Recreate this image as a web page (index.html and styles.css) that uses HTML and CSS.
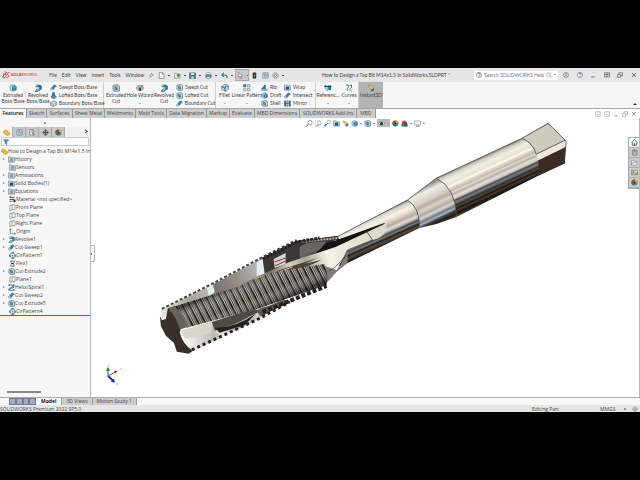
FILE: index.html
```html
<!DOCTYPE html>
<html lang="en">
<head>
<meta charset="utf-8">
<title>SOLIDWORKS Premium 2022</title>
<link rel="stylesheet" href="styles.css">
</head>
<body>
<svg class="defs" aria-hidden="true">
  <symbol id="boss" viewBox="0 0 16 16"><path d="M2 4l6-3 6 3v8l-6 3-6-3z" fill="#b9d4e2" stroke="#577a8c"/><path d="M6 5l5-2 4 2v7l-5 2-4-2z" fill="#1c789f"/><path d="M6 5l4 2 5-2M10 7v7" stroke="#b9e1ee" fill="none"/></symbol>
  <symbol id="revolve" viewBox="0 0 16 16"><path d="M4 2h6a5 5 0 0 1 1 10l-3 3H2l4-5h3a2 2 0 0 0 0-4H4z" fill="#247da4" stroke="#1b536e"/><path d="M3 3l5 1M5 13l5-2" stroke="#b8dce8" stroke-width="2"/></symbol>
  <symbol id="sweep" viewBox="0 0 16 16"><path d="M2 14V9c5 1 3-7 9-7l4 3c-6 0-4 8-10 8z" fill="#2683ad" stroke="#1d536d"/><path d="M2 9l4 2v4l-4-1z" fill="#b5d6e5"/></symbol>
  <symbol id="loft" viewBox="0 0 16 16"><path d="M6 1h4l1 6 4 5-5 3-8-2 3-6z" fill="#2e7898" stroke="#23485a"/><path d="M2 13l5-2 8 1" stroke="#d2edf5" fill="none"/></symbol>
  <symbol id="boundary" viewBox="0 0 16 16"><path d="M1 6l8-4 6 3v6l-8 4-6-3z" fill="#d4dce0" stroke="#647078" stroke-width="1.5"/><path d="M1 7l6 3 8-4M7 10v5" fill="none" stroke="#647078"/></symbol>
  <symbol id="cut" viewBox="0 0 16 16"><path d="M2 3l9-2 4 3v10l-9 1-4-3z" fill="#c5d1d7" stroke="#4b6470" stroke-width="1.3"/><path d="M5 5h6v7H5z" fill="#286f8e"/><path d="M5 12l6-7" stroke="#edf5f7"/></symbol>
  <symbol id="hole" viewBox="0 0 16 16"><ellipse cx="8" cy="8" rx="7" ry="5" fill="#c9cdd0" stroke="#555"/><path d="M5 7h5v7H7z" fill="#39454c"/><path d="M8 7l5-6 2 2-5 6z" fill="#888d91"/></symbol>
  <symbol id="fillet" viewBox="0 0 16 16"><path d="M1 5l6-4h4c3 0 4 3 4 5v5l-6 4-8-4z" fill="#bed3dc" stroke="#557180"/><path d="M1 5l7 3c0-4 3-5 7-3M8 8v7" fill="none" stroke="#276b86" stroke-width="2"/></symbol>
  <symbol id="linear" viewBox="0 0 16 16"><path d="M1 1h5v5H1zM9 1h5v5H9zM1 9h5v5H1zM9 9h5v5H9z" fill="#d0dce1" stroke="#5e7a86"/><path d="M1 1h5v5H1z" fill="#2b7b9e"/></symbol>
  <symbol id="rib" viewBox="0 0 16 16"><path d="M1 11L9 1l2 1v9h4v4H1z" fill="#286f8e"/><path d="M1 12h14v2H1z" fill="#b3cbd5"/></symbol>
  <symbol id="curves" viewBox="0 0 16 16"><path d="M2 2h4c4 4-5 7 0 12M9 3l4-1v5c-4 2-4 5 0 7" fill="none" stroke="#2d7c9a" stroke-width="2"/></symbol>
  <symbol id="refgeo" viewBox="0 0 16 16"><path d="M2 2l6 3v9L2 9z" fill="#b7dbe9" stroke="#387088"/><path d="M8 3h6v9H9z" fill="#1c7498"/><path d="M1 5h14" stroke="#183e50" stroke-width="2"/></symbol>
  <symbol id="instant" viewBox="0 0 16 16"><path d="M2 2l6 1 6 7-2 4-6-5z" fill="#e7ce7c" stroke="#8d7527"/><path d="M8 11l6-3v5l-5 2z" fill="#386b83"/></symbol>
  <symbol id="mirror" viewBox="0 0 16 16"><path d="M1 2h4v12H1zM11 2h4v12h-4z" fill="#487c93" stroke="#294b5a"/><path d="M8 0v16M4 8h8" stroke="#222"/></symbol>
  <symbol id="part" viewBox="0 0 16 16"><path d="M1 5l4-3 5 2 1 3 4 1v4l-4 3-5-2-1-3-4-1z" fill="#e2b42c" stroke="#8e6b12"/><path d="M1 5l5 2 4-3M6 12l5-2 4-2" fill="none" stroke="#fff1a6"/></symbol>
  <symbol id="folder" viewBox="0 0 16 16"><path d="M1 2h5l1 2h8v10H1z" fill="#dfe5e8" stroke="#65727a" stroke-width="1.4"/><path d="M5 6h6v6H5zM8 6v6M5 9h6" fill="none" stroke="#356882"/></symbol>
  <symbol id="solid" viewBox="0 0 16 16"><path d="M1 2h5l1 2h8v10H1z" fill="#dfe5e8" stroke="#65727a" stroke-width="1.4"/><path d="M4 6h8v7H4z" fill="#195575"/></symbol>
  <symbol id="material" viewBox="0 0 16 16"><path d="M1 3h12M1 8h12M1 12h7" stroke="#555" stroke-width="2"/><path d="M10 10l5-2v5l-4 2z" fill="#252525"/><path d="M4 1v4M9 6v4" stroke="#222" stroke-width="2"/></symbol>
  <symbol id="plane" viewBox="0 0 16 16"><path d="M2 3l5-1v11l-5 2zM7 2h7v11H7" fill="#f8f9fa" stroke="#68727a" stroke-width="1.4"/></symbol>
  <symbol id="origin" viewBox="0 0 16 16"><path d="M3 2v11h11M1 4l2-3 2 3M12 11l3 2-3 2" fill="none" stroke="#545d63" stroke-width="1.5"/></symbol>
  <symbol id="pattern" viewBox="0 0 16 16"><circle cx="8" cy="8" r="6" fill="none" stroke="#5c717c" stroke-width="1.5"/><path d="M6 0h5v4H6zM0 6h4v5H0zM12 6h4v5h-4zM6 12h5v4H6zM6 6h4v4H6z" fill="#66869a"/></symbol>
  <symbol id="flex" viewBox="0 0 16 16"><path d="M4 2h8v3c-4 2-4 4 0 6v3H4v-3c3-2 3-4 0-6z" fill="#e1e5e7" stroke="#4c5357" stroke-width="1.5"/><path d="M5 8h5" stroke="#222" stroke-width="2"/></symbol>
  <symbol id="helix" viewBox="0 0 16 16"><path d="M2 3c4-3 12 1 12 4S2 8 2 11s8 5 12 2M3 13L13 3" fill="none" stroke="#256a86" stroke-width="2"/><path d="M1 1h3v3H1zM12 1h3v3h-3zM1 12h3v3H1zM12 12h3v3h-3z" fill="#315b6f"/></symbol>
  <symbol id="search" viewBox="0 0 16 16"><circle cx="9" cy="6" r="5" fill="none" stroke="#59636a" stroke-width="1.4"/><path d="M5 10l-4 5" stroke="#59636a" stroke-width="2"/></symbol>
  <symbol id="search-r" viewBox="0 0 16 16"><circle cx="7" cy="7" r="5" fill="none" stroke="#687177" stroke-width="1.3"/><path d="M11 11l4 4" stroke="#687177" stroke-width="1.5"/></symbol>
  <symbol id="area" viewBox="0 0 16 16"><path d="M1 1h12v12H1z" fill="none" stroke="#7b858c" stroke-dasharray="2 2"/><circle cx="10" cy="7" r="4" fill="#fff" stroke="#59636a"/><path d="M7 10l-4 5" stroke="#59636a" stroke-width="2"/></symbol>
  <symbol id="previous" viewBox="0 0 16 16"><circle cx="11" cy="5" r="4" fill="none" stroke="#59636a"/><path d="M8 8l-5 5H1M5 9l-4 4 4 2" stroke="#1f779b" fill="none" stroke-width="2"/></symbol>
  <symbol id="appearance" viewBox="0 0 16 16"><circle cx="8" cy="8" r="7" fill="#3b83c3"/><path d="M8 8V1a7 7 0 0 1 7 7z" fill="#e4a926"/><path d="M8 8v7a7 7 0 0 1-7-7z" fill="#298c4e"/><path d="M1 8a7 7 0 0 1 7-7v7z" fill="#c8352c"/><circle cx="8" cy="8" r="2" fill="#292929"/></symbol>
  <symbol id="scene" viewBox="0 0 16 16"><circle cx="7" cy="6" r="5" fill="#c63d2b"/><path d="M1 15V7l6 4 8-2v6z" fill="#268a66"/><path d="M8 8l6-4v10l-6 1z" fill="#42525d"/></symbol>
  <symbol id="monitor" viewBox="0 0 16 16"><path d="M1 2h14v9H1zM6 11v3h5v-3M4 15h9" fill="#f3f4f5" stroke="#7b8389" stroke-width="1.2"/></symbol>
  <symbol id="eye" viewBox="0 0 16 16"><path d="M1 8q7-9 14 0-7 8-14 0z" fill="#fff" stroke="#444"/><circle cx="8" cy="8" r="3.5" fill="#1d292f"/></symbol>
  <symbol id="new" viewBox="0 0 16 16"><path d="M3 1h7l4 4v10H3zM10 1v4h4" fill="#fafafa" stroke="#5a6267" stroke-width="1.3"/></symbol>
  <symbol id="open" viewBox="0 0 16 16"><path d="M1 3h5l1 2h7v9H1z" fill="#eee" stroke="#5c6870" stroke-width="1.2"/><path d="M5 8l5-5 5 5h-3v4H8V8z" fill="#319158"/></symbol>
  <symbol id="save" viewBox="0 0 16 16"><path d="M1 2h14v13H1z" fill="#467789" stroke="#344f5b"/><path d="M4 2h8v5H4zM5 10h6v5H5z" fill="#d7e3e8"/></symbol>
  <symbol id="print" viewBox="0 0 16 16"><path d="M4 1h8v5H4z" fill="#fff" stroke="#536773"/><path d="M1 6h14v7H1z" fill="#53798a"/><path d="M4 10h8v5H4z" fill="#e4edf1" stroke="#536773"/></symbol>
  <symbol id="undo" viewBox="0 0 16 16"><path d="M13 14c3-5-1-8-9-7M6 2L2 7l5 4" fill="none" stroke="#25768d" stroke-width="2.5"/></symbol>
  <symbol id="cursor" viewBox="0 0 16 16"><path d="M4 1l8 8H9l2 5-2 1-2-5-3 2z" fill="#fff" stroke="#444"/></symbol>
  <symbol id="traffic" viewBox="0 0 16 16"><rect x="4" y="1" width="8" height="14" rx="2" fill="#24282a"/><circle cx="8" cy="4" r="2" fill="#a53026"/><circle cx="8" cy="8" r="2" fill="#d2a33c"/><circle cx="8" cy="12" r="2" fill="#34794a"/></symbol>
  <symbol id="list" viewBox="0 0 16 16"><path d="M2 2h12v12H2zM7 2v12M2 5h12" fill="#fff" stroke="#487284" stroke-width="1.4"/><path d="M9 8h4M9 11h4M4 8h2M4 11h2" stroke="#256a87" stroke-width="1.5"/></symbol>
  <symbol id="config" viewBox="0 0 16 16"><path d="M2 1h8v13H2zM5 4h5M5 7h3" fill="#f3f4f5" stroke="#555f66" stroke-width="1.3"/><path d="M8 7l6 6-3 2-4-4z" fill="#737f86"/></symbol>
  <symbol id="target" viewBox="0 0 16 16"><circle cx="8" cy="8" r="5" fill="none" stroke="#4e5458" stroke-width="1.7"/><path d="M8 0v16M1 8h14" stroke="#333" stroke-width="1.7"/></symbol>
  <symbol id="gear" viewBox="0 0 16 16"><circle cx="8" cy="8" r="6" fill="none" stroke="#555c60" stroke-width="2" stroke-dasharray="3 1.6"/><circle cx="8" cy="8" r="2.5" fill="none" stroke="#555c60" stroke-width="1.3"/></symbol>
  <symbol id="user" viewBox="0 0 16 16"><circle cx="8" cy="8" r="7" fill="none" stroke="#555c60" stroke-width="1.3"/><circle cx="8" cy="6" r="2.5" fill="none" stroke="#555c60"/><path d="M4 13c0-5 8-5 8 0" fill="none" stroke="#555c60" stroke-width="1.3"/></symbol>
  <symbol id="help" viewBox="0 0 16 16"><circle cx="8" cy="8" r="7" fill="#fafafa" stroke="#54616a" stroke-width="1.4"/><path d="M5 6c0-4 6-4 6 0 0 2-3 2-3 4m0 1v2" stroke="#34556a" fill="none" stroke-width="1.8"/></symbol>
  <symbol id="min" viewBox="0 0 16 16"><path d="M3 13h9" stroke="currentColor" stroke-width="2"/></symbol>
  <symbol id="span" viewBox="0 0 16 16"><path d="M1 2h14v11H1zM1 7h14M8 2v11" fill="none" stroke="currentColor" stroke-width="1.5"/></symbol>
  <symbol id="pane" viewBox="0 0 16 16"><path d="M2 2h12v12H2zM6 9h5" fill="none" stroke="currentColor" stroke-width="1.4"/></symbol>
  <symbol id="restore" viewBox="0 0 16 16"><path d="M1 7h9v7H1zM5 7V2h10v8h-5" fill="none" stroke="currentColor" stroke-width="1.5"/></symbol>
  <symbol id="close" viewBox="0 0 16 16"><path d="M3 3l10 10M13 3L3 13" stroke="currentColor" stroke-width="2"/></symbol>
  <symbol id="filter" viewBox="0 0 16 16"><path d="M1 2h14l-5 6v7l-4-3V8z" fill="#679bb5" stroke="#1f4e67" stroke-width="1.4"/></symbol>
  <symbol id="home" viewBox="0 0 16 16"><path d="M1 8l7-7 7 7M3 7v8h10V7" fill="#e9f1f4" stroke="#396a7f" stroke-width="1.7"/><path d="M6 10h4v5H6z" fill="#396a7f"/></symbol>
  <symbol id="library" viewBox="0 0 16 16"><path d="M3 3l5-2 6 2v10l-6 2-5-2z" fill="#8f9599" stroke="#555"/><path d="M3 6l5 2 6-2M3 10l5 2 6-2M8 8v7" stroke="#eee" fill="none"/></symbol>
  <symbol id="files" viewBox="0 0 16 16"><path d="M1 3h5l2 2h5v3h2l-3 6H1zM1 13l3-5h9" fill="#f3f3f1" stroke="#687177" stroke-width="1.2"/></symbol>
  <symbol id="palette" viewBox="0 0 16 16"><path d="M1 3h14v10H1z" fill="#eee4b6" stroke="#68716c" stroke-width="1.4"/><path d="M3 5h5v6H3z" fill="#6f92a0"/><path d="M10 8h5v5h-5z" fill="#9a812d"/></symbol>
  <symbol id="pin" viewBox="0 0 16 16"><path d="M8 1l6 6-4 1-3 4-4-5 4-2zM5 10l-4 5" fill="none" stroke="#43494d" stroke-width="1.5"/></symbol>
</svg>

<main class="app">
  <header class="titlebar">
    <a class="brand" href="#" aria-label="SOLIDWORKS">
      <svg viewBox="0 0 16 16"><path d="M1 13l4-7H2M5 2c5-1 5 3 1 4 5 2 3 6-4 8M15 3c-5 0-6 3-3 5s2 5-3 5" fill="none" stroke="#d02b2d" stroke-width="1.8"/></svg>
      <span><b>SOLID</b>WORKS</span>
    </a>
    <nav class="menu"><a href="#">File</a><a href="#">Edit</a><a href="#">View</a><a href="#">Insert</a><a href="#">Tools</a><a href="#">Window</a><svg><use href="#pin"/></svg></nav>
    <div class="quick">
      <button aria-label="New"><svg><use href="#new"/></svg></button>
      <button aria-label="Open"><svg><use href="#open"/></svg></button>
      <button aria-label="Save"><svg><use href="#save"/></svg></button>
      <button aria-label="Print"><svg><use href="#print"/></svg></button>
      <button aria-label="Undo"><svg><use href="#undo"/></svg></button>
      <button class="picked" aria-label="Select"><svg><use href="#cursor"/></svg></button>
      <button class="plain" aria-label="Rebuild"><svg><use href="#traffic"/></svg></button>
      <button class="plain" aria-label="File properties"><svg><use href="#list"/></svg></button>
      <button aria-label="Options"><svg><use href="#gear"/></svg></button>
    </div>
    <h1>How to Design a Tap Bit M14x1.5 In SolidWorks.SLDPRT *</h1>
    <label class="search"><svg><use href="#help"/></svg><input type="text" placeholder="Search SOLIDWORKS Help" aria-label="Search SOLIDWORKS Help"><svg><use href="#search-r"/></svg><i class="caret"></i></label>
    <div class="window-tools">
      <button aria-label="Account"><svg><use href="#user"/></svg></button>
      <button aria-label="Help"><svg><use href="#help"/></svg></button>
      <button aria-label="Minimize"><svg><use href="#min"/></svg></button>
      <button aria-label="Span displays"><svg><use href="#span"/></svg></button>
      <button aria-label="Restore"><svg><use href="#restore"/></svg></button>
      <button aria-label="Close"><svg><use href="#close"/></svg></button>
    </div>
  </header>

  <section class="ribbon" aria-label="Features">
    <div class="group boss-group">
      <button class="large"><svg><use href="#boss"/></svg><span>Extruded Boss/Base</span></button>
      <button class="large"><svg><use href="#revolve"/></svg><span>Revolved Boss/Base</span></button>
      <div class="stack">
        <button><svg><use href="#sweep"/></svg>Swept Boss/Base</button>
        <button><svg><use href="#loft"/></svg>Lofted Boss/Base</button>
        <button><svg><use href="#boundary"/></svg>Boundary Boss/Base</button>
      </div>
    </div>
    <div class="group cut-group">
      <button class="large"><svg><use href="#cut"/></svg><span>Extruded Cut</span></button>
      <button class="large more"><svg><use href="#hole"/></svg><span>Hole Wizard</span></button>
      <button class="large"><svg><use href="#revolve"/></svg><span>Revolved Cut</span></button>
      <div class="stack">
        <button><svg><use href="#cut"/></svg>Swept Cut</button>
        <button><svg><use href="#cut"/></svg>Lofted Cut</button>
        <button><svg><use href="#sweep"/></svg>Boundary Cut</button>
      </div>
    </div>
    <div class="group shape-group">
      <button class="large more"><svg><use href="#fillet"/></svg><span>Fillet</span></button>
      <button class="large more"><svg><use href="#linear"/></svg><span>Linear Pattern</span></button>
      <div class="stack">
        <button><svg><use href="#rib"/></svg>Rib</button>
        <button><svg><use href="#boss"/></svg>Draft</button>
        <button><svg><use href="#cut"/></svg>Shell</button>
      </div>
      <div class="stack">
        <button><svg><use href="#solid"/></svg>Wrap</button>
        <button><svg><use href="#sweep"/></svg>Intersect</button>
        <button><svg><use href="#mirror"/></svg>Mirror</button>
      </div>
    </div>
    <div class="group ref-group">
      <button class="large more"><svg><use href="#refgeo"/></svg><span>Referenc...</span></button>
      <button class="large more"><svg><use href="#curves"/></svg><span>Curves</span></button>
    </div>
    <button class="large instant"><svg><use href="#instant"/></svg><span>Instant3D</span></button>
    <button class="collapse" aria-label="Collapse ribbon"><i></i></button>
  </section>

  <div class="tabrow">
    <nav class="tabs"><a class="active" href="#">Features</a><a href="#">Sketch</a><a href="#">Surfaces</a><a href="#">Sheet Metal</a><a href="#">Weldments</a><a href="#">Mold Tools</a><a href="#">Data Migration</a><a href="#">Markup</a><a href="#">Evaluate</a><a href="#">MBD Dimensions</a><a href="#">SOLIDWORKS Add-Ins</a><a href="#">MBD</a></nav>
    <div class="doc-tools">
      <button aria-label="Left pane"><svg><use href="#pane"/></svg></button>
      <button aria-label="Right pane"><svg><use href="#pane"/></svg></button>
      <button aria-label="Minimize document"><svg><use href="#min"/></svg></button>
      <button aria-label="Restore document"><svg><use href="#restore"/></svg></button>
      <button aria-label="Close document"><svg><use href="#close"/></svg></button>
    </div>
  </div>

  <div class="work">
    <aside class="panel">
      <div class="grip"><i></i></div>
      <nav class="panel-tabs">
        <button class="active" aria-label="Feature tree"><svg><use href="#part"/></svg></button>
        <button aria-label="Properties"><svg><use href="#list"/></svg></button>
        <button aria-label="Configurations"><svg><use href="#config"/></svg></button>
        <button aria-label="Dimensions"><svg><use href="#target"/></svg></button>
        <button aria-label="Appearances"><svg><use href="#appearance"/></svg></button>
        <span class="next"></span>
      </nav>
      <label class="filter"><svg><use href="#filter"/></svg><input type="text" aria-label="Filter tree"></label>
      <ul class="tree">
        <li class="root"><svg><use href="#part"/></svg>How to Design a Tap Bit M14x1.5 In</li>
        <li class="open"><svg><use href="#folder"/></svg>History</li>
        <li><svg><use href="#folder"/></svg>Sensors</li>
        <li class="open"><svg><use href="#folder"/></svg>Annotations</li>
        <li class="open"><svg><use href="#solid"/></svg>Solid Bodies(1)</li>
        <li class="open"><svg><use href="#folder"/></svg>Equations</li>
        <li><svg><use href="#material"/></svg>Material &lt;not specified&gt;</li>
        <li><svg><use href="#plane"/></svg>Front Plane</li>
        <li><svg><use href="#plane"/></svg>Top Plane</li>
        <li><svg><use href="#plane"/></svg>Right Plane</li>
        <li><svg><use href="#origin"/></svg>Origin</li>
        <li class="open"><svg><use href="#revolve"/></svg>Revolve1</li>
        <li class="open"><svg><use href="#sweep"/></svg>Cut-Sweep1</li>
        <li><svg><use href="#pattern"/></svg>CirPattern1</li>
        <li><svg><use href="#flex"/></svg>Flex1</li>
        <li class="open"><svg><use href="#cut"/></svg>Cut-Extrude2</li>
        <li><svg><use href="#plane"/></svg>Plane1</li>
        <li class="open"><svg><use href="#helix"/></svg>Helix/Spiral1</li>
        <li class="open"><svg><use href="#sweep"/></svg>Cut-Sweep2</li>
        <li class="open"><svg><use href="#cut"/></svg>Cut-Extrude5</li>
        <li><svg><use href="#pattern"/></svg>CirPattern4</li>
      </ul>
      <div class="scroll"><i></i></div>
    </aside>

    <section class="viewport" aria-label="Model view">
      <svg class="model" viewBox="91 118 549 279" role="img" aria-label="Tap bit">
        <defs>
          <linearGradient id="shank" gradientUnits="userSpaceOnUse" x1="437" y1="178" x2="455" y2="217">
            <stop offset="0" stop-color="#8d8a85"/><stop offset=".06" stop-color="#d4d0c8"/><stop offset=".16" stop-color="#f4efe6"/><stop offset=".26" stop-color="#e9e2d7"/><stop offset=".3" stop-color="#fffaf0"/><stop offset=".36" stop-color="#d9d1c5"/><stop offset=".42" stop-color="#c2b9ad"/><stop offset=".45" stop-color="#e1dacf"/><stop offset=".5" stop-color="#b8b0a7"/><stop offset=".56" stop-color="#e4dfd8"/><stop offset=".61" stop-color="#c9c5c0"/><stop offset=".65" stop-color="#4e4e51"/><stop offset=".7" stop-color="#777a80"/><stop offset=".76" stop-color="#303033"/><stop offset=".8" stop-color="#504237"/><stop offset=".84" stop-color="#191615"/><stop offset=".88" stop-color="#46372d"/><stop offset=".94" stop-color="#17120f"/><stop offset="1" stop-color="#49382d"/>
          </linearGradient>
          <linearGradient id="neck" gradientUnits="userSpaceOnUse" x1="408" y1="200" x2="421" y2="229">
            <stop offset="0" stop-color="#8c8984"/><stop offset=".1" stop-color="#d8d4cd"/><stop offset=".25" stop-color="#f7f2ea"/><stop offset=".38" stop-color="#ddd6cb"/><stop offset=".5" stop-color="#b4aaa0"/><stop offset=".6" stop-color="#e4ddd4"/><stop offset=".67" stop-color="#a49e99"/><stop offset=".71" stop-color="#4a4b4f"/><stop offset=".78" stop-color="#777"/><stop offset=".83" stop-color="#241e1b"/><stop offset=".9" stop-color="#57483d"/><stop offset="1" stop-color="#211a16"/>
          </linearGradient>
          <linearGradient id="cone" gradientUnits="userSpaceOnUse" x1="422" y1="188" x2="440" y2="225">
            <stop offset="0" stop-color="#96928d"/><stop offset=".12" stop-color="#f0ece5"/><stop offset=".32" stop-color="#d7d0c6"/><stop offset=".42" stop-color="#b5ada3"/><stop offset=".5" stop-color="#d9d2c8"/><stop offset=".6" stop-color="#b4aca4"/><stop offset=".67" stop-color="#d5d4d4"/><stop offset=".75" stop-color="#747880"/><stop offset=".8" stop-color="#acb3bd"/><stop offset=".85" stop-color="#43474e"/><stop offset=".92" stop-color="#221d1a"/><stop offset="1" stop-color="#41332a"/>
          </linearGradient>
          <linearGradient id="flute" gradientUnits="userSpaceOnUse" x1="165" y1="310" x2="325" y2="240">
            <stop offset="0" stop-color="#e4e0da"/><stop offset=".15" stop-color="#a8a29b"/><stop offset=".27" stop-color="#bdb7b0"/><stop offset=".31" stop-color="#77726d"/><stop offset=".46" stop-color="#9a9189"/><stop offset=".58" stop-color="#b1b6b9"/><stop offset=".66" stop-color="#55504c"/><stop offset=".8" stop-color="#817a75"/><stop offset="1" stop-color="#302d2a"/>
          </linearGradient>
          <linearGradient id="lower" gradientUnits="userSpaceOnUse" x1="182" y1="345" x2="285" y2="300">
            <stop offset="0" stop-color="#fff"/><stop offset=".3" stop-color="#bcb8b3"/><stop offset=".38" stop-color="#efedeb"/><stop offset=".55" stop-color="#96908c"/><stop offset=".72" stop-color="#d7d4d1"/><stop offset=".8" stop-color="#4c4641"/><stop offset="1" stop-color="#7d756d"/>
          </linearGradient>
          <linearGradient id="petal" gradientUnits="userSpaceOnUse" x1="270" y1="275" x2="370" y2="230">
            <stop offset="0" stop-color="#6c6760"/><stop offset=".2" stop-color="#d8d1c4"/><stop offset=".35" stop-color="#aaa59c"/><stop offset=".55" stop-color="#f7f2e8"/><stop offset="1" stop-color="#ded9cd"/>
          </linearGradient>
          <pattern id="thread" width="7" height="60" patternUnits="userSpaceOnUse" patternTransform="translate(176 308) skewX(27) skewY(-17)">
            <path d="M0 0h7v60H0z" fill="#5e5954"/><path d="M0 0h2v60H0z" fill="#191817"/><path d="M2 0h1v60H2z" fill="#bdb7ae"/><path d="M3 0h1v60H3z" fill="#3a3633"/><path d="M4 0h1v60H4z" fill="#b0a99f"/><path d="M6 0h1v60H6z" fill="#84796e"/>
          </pattern>
          <linearGradient id="shade" gradientUnits="userSpaceOnUse" x1="250" y1="278" x2="263" y2="308">
            <stop offset="0" stop-color="#171412" stop-opacity=".5"/><stop offset=".3" stop-color="#fff" stop-opacity=".12"/><stop offset=".6" stop-color="#fff" stop-opacity="0"/><stop offset="1" stop-color="#171412" stop-opacity=".55"/>
          </linearGradient>
        </defs>

        <path d="M337 237L408 200Q421 208 420 228L348 263 327 270z" fill="url(#neck)"/>
        <path d="M408 200L437 178Q457 188 457 217L437 224 420 228Q421 208 408 200z" fill="url(#cone)"/>
        <path d="M437 178L523 138 549 123 566 140V163L540 175 457 217Q457 188 437 178z" fill="url(#shank)"/>
        <path d="M539 160L567 146 565 163 540 175z" fill="#3b2b23"/>
        <path d="M537 154L566 140V147L539 160z" fill="#ebe9e0"/>
        <path d="M523 138L549 124 566 140 537 154Q532 142 523 138z" fill="#cfccbe"/>
        <path d="M437 178Q457 188 457 217M408 200Q421 208 420 228M523 138Q534 143 537 154L566 140M337 237L408 200 437 178 523 138 549 123 567 141 565 163" fill="none" stroke="#46423d" stroke-width=".8"/>

        <path d="M161 310L212 285 263 258 297 241 338 236 320 260 270 274 238 288 173 308 163 318z" fill="url(#flute)"/>
        <path d="M207 287l6-3 2 8-6 4zM257 262l6-3 2 15-8 2z" fill="#e4edf0"/>
        <path d="M263 258l34-17 12 2-9 16-35 14z" fill="#3a3735"/>
        <path d="M274 259l12-6v11l-11 4z" fill="#dcd2d0"/><path d="M275 262l11-4M275 266l11-5" stroke="#713d3b"/>
        <path d="M300 244l28-4-8 10-20 7z" fill="#6a6462"/>
        <path d="M297 241l41-5 2 4-33 3-13 7z" fill="#35322f"/>
        <path d="M300 242l38-4" stroke="#bbb7ae" stroke-width="2" stroke-dasharray="2 1"/>
        <path d="M326 244L385 223 386 227 340 246 310 259z" fill="#17120f"/>
        <path d="M240 285L290 262 336 247 387 223Q388 237 373 240L348 250Q342 265 327 280L324 266 273 273z" fill="url(#petal)"/>
        <path d="M252 281l28-11 38-12-32 14zM280 274l24-10 18-4-20 9z" fill="#4b4238"/>
        <path d="M255 279l23-8M265 277l28-10" stroke="#e5c982"/>
        <path d="M337 270Q347 257 348 250V263L337 272 327 283 325 266z" fill="#807c79"/>
        <path d="M348 250l25-10M367 231l6 9M348 250Q343 263 330 271" fill="none" stroke="#45413c" stroke-width=".8"/>

        <path d="M181 331L257 309 288 301 255 321 192 352 186 348z" fill="url(#lower)"/>
        <path d="M181 331l31-9v12l-27 5z" fill="#d8d5cb"/>
        <path d="M212 322l41-13 8 2-26 13-20 7z" fill="#504a45"/>
        <path d="M215 328q22 0 42-15l-12 12-25 8z" fill="#232120"/>
        <path d="M257 311l26-11 9 1-31 15z" fill="#5d564e"/>
        <path d="M173 307L238 287 273 272 325 264Q329 274 327 285L257 309 187 328z" fill="url(#thread)"/>
        <path d="M173 307L238 287 273 272 325 264Q329 274 327 285L257 309 187 328z" fill="url(#shade)"/>
        <path d="M162 309L212 284 263 257 297 240" fill="none" stroke="#4a443f" stroke-width="2" stroke-dasharray="3 2"/>
        <path d="M263 259L297 242 320 238" fill="none" stroke="#25211e" stroke-width="3" stroke-dasharray="3 1"/>
        <path d="M192 350L257 320 290 302" fill="none" stroke="#27211e" stroke-width="3" stroke-dasharray="3 3"/>
        <path d="M263 312L327 286" fill="none" stroke="#27211e" stroke-width="4" stroke-dasharray="4 2"/>
        <path d="M160 316L162 320 166 319 168 308 175 310 181 328 180 333Q183 345 193 351L189 354 177 352 174 343 166 336 161 326z" fill="#3b3029"/>
        <path d="M168 308l7-2q9 9 13 21l-8 3q-3-13-12-22z" fill="#68625d"/>

        <g class="triad"><path d="M108 376v-7" stroke="#20772f"/><path d="M106 371l2-4 2 4z" fill="#20772f"/><path d="M108 376l8-4" stroke="#9b4b43"/><path d="M114 371l4 0-3 3z" fill="#c12a24"/><path d="M108 376l5 5" stroke="#23349c" stroke-width="2"/><path d="M115 383l-4-1 3-3z" fill="#1c2b91"/><text x="120" y="370" fill="#d78178">x</text><text x="108" y="366" fill="#7bac84">y</text><text x="116" y="385" fill="#6b78bd">z</text></g>
      </svg>

      <div class="view-tools">
        <button aria-label="Zoom to fit"><svg><use href="#search"/></svg></button>
        <button aria-label="Zoom to area"><svg><use href="#area"/></svg></button>
        <button aria-label="Previous view"><svg><use href="#previous"/></svg></button>
        <button aria-label="Section view"><svg><use href="#solid"/></svg></button>
        <button aria-label="Dynamic annotation"><svg><use href="#instant"/></svg></button>
        <button class="drop" aria-label="View orientation"><svg><use href="#boss"/></svg></button>
        <button class="drop" aria-label="Display style"><svg><use href="#cut"/></svg></button>
        <button class="drop on" aria-label="Hide or show items"><svg><use href="#eye"/></svg></button>
        <button aria-label="Edit appearance"><svg><use href="#appearance"/></svg></button>
        <button class="drop" aria-label="Apply scene"><svg><use href="#scene"/></svg></button>
        <button class="drop" aria-label="View settings"><svg><use href="#monitor"/></svg></button>
      </div>
      <button class="splitter" aria-label="Collapse panel"><i></i></button>
      <div class="task-pane">
        <button aria-label="Resources"><svg><use href="#home"/></svg></button>
        <button aria-label="Design library"><svg><use href="#library"/></svg></button>
        <button aria-label="File explorer"><svg><use href="#files"/></svg></button>
        <button aria-label="View palette"><svg><use href="#palette"/></svg></button>
        <button aria-label="Appearances"><svg><use href="#appearance"/></svg></button>
      </div>
    </section>
  </div>

  <nav class="sheets">
    <div class="steps"><button aria-label="First"></button><button aria-label="Previous"></button><button aria-label="Next"></button><button aria-label="Last"></button></div>
    <a class="active" href="#">Model</a><a href="#">3D Views</a><a href="#">Motion Study 1</a>
  </nav>
  <footer class="status"><span>SOLIDWORKS Premium 2022 SP5.0</span><span>Editing Part</span><span>MMGS</span><i></i><svg><use href="#gear"/></svg></footer>
</main>
</body>
</html>
```
FILE: styles.css
```css
* { box-sizing: border-box; }

body {
  margin: 0;
  background: #000;
  color: #444;
  font: 5px/6px "Open Sans", "Noto Sans", sans-serif;
}

.defs { position: absolute; width: 0; height: 0; }

button, input {
  margin: 0;
  padding: 0;
  border: 0;
  background: none;
  color: inherit;
  font: inherit;
  min-width: 0;
}

a { color: inherit; text-decoration: none; }
svg { display: block; width: 7px; height: 7px; flex: none; }

.app {
  display: flex;
  flex-direction: column;
  height: 100vh;
  padding: 68px 0;
}

/* Title bar */
.titlebar {
  display: grid;
  grid-template-columns: 49px 108px 130px 1fr 84px 82px;
  align-items: center;
  height: 14px;
  flex: none;
  background: #e6e6e6;
  font-family: Lato, "Open Sans", sans-serif;
  white-space: nowrap;
}
.brand { display: flex; align-items: center; gap: 1px; padding-left: 2px; color: #c9373a; font-family: "Open Sans", sans-serif; font-size: 4px; }
.brand svg { width: 8px; height: 8px; }
.menu { display: flex; align-items: center; gap: 5px; }
.menu svg { width: 5px; height: 5px; }
.quick { display: flex; align-items: center; }
.quick button { display: flex; align-items: center; gap: 3px; width: 16px; height: 12px; padding-left: 1px; }
.quick button::after { content: ""; width: 2px; height: 1px; background: #555; }
.quick .plain { width: 11px; }
.quick .plain::after { display: none; }
.quick .picked { width: 14px; margin-right: 1px; background: #c8c8c8; border: 1px solid #aaa; }
.titlebar h1 { margin: 0; padding-left: 35px; font: inherit; }
.search { display: flex; align-items: center; gap: 2px; height: 9px; padding: 0 2px; background: #fff; color: #777; }
.search input { flex: 1; width: 40px; height: 8px; }
.search input::placeholder { color: #777; opacity: 1; }
.search svg { width: 6px; height: 6px; }
.caret { border: 1px solid transparent; border-top-color: #444; }
.window-tools { display: flex; justify-content: space-between; padding: 0 3px 0 5px; color: #444; }
.window-tools svg { width: 6px; height: 6px; }

/* Command ribbon */
.ribbon { position: relative; display: flex; height: 26px; flex: none; background: #f6f6f6; font-family: Lato, "Open Sans", sans-serif; }
.group { display: grid; border-right: 1px solid #d0d0d0; padding-top: 1px; }
.boss-group { grid-template-columns: 26px 24px 53px; }
.cut-group { grid-template-columns: 24px 24px 24px 39px; }
.shape-group { grid-template-columns: 17px 28px 23px 31px; }
.ref-group { grid-template-columns: 24px 18px; }
.large { position: relative; display: flex; flex-direction: column; align-items: center; padding-top: 1px; line-height: 6px; text-align: center; }
.large svg { width: 8px; height: 8px; }
.boss-group .large span { width: 24px; }
.large.more::after { content: ""; position: absolute; bottom: 3px; border: 1px solid transparent; border-top-color: #777; }
.more span { white-space: nowrap; }
.instant { width: 24px; padding-top: 2px; background: #b3b3b3; }
.stack { display: grid; grid-template-rows: repeat(3, 8px); }
.stack button { display: flex; align-items: center; gap: 2px; white-space: nowrap; }
.stack svg { width: 7px; height: 7px; }
.collapse { margin-left: auto; align-self: flex-end; padding: 3px; }
.collapse i { display: block; border: 2px solid transparent; border-top: 0; border-bottom-color: #333; }

/* Ribbon tabs */
.tabrow { display: flex; justify-content: space-between; height: 10px; flex: none; background: #fff; border-top: 1px solid #a9a9a9; }
.tabs { display: grid; grid-template-columns: 27px 20px 26px 32px 31px 31px 40px 23px 25px 45px 57px 19px; }
.tabs a { height: 9px; background: #cdcdcd; border-right: 1px solid #999; line-height: 9px; text-align: center; white-space: nowrap; }
.tabs .active { background: #f6f6f6; color: #111; font-weight: 600; }
.doc-tools { display: flex; align-items: center; gap: 3px; padding-right: 3px; color: #888; }
.doc-tools svg { width: 6px; height: 6px; }

/* Feature tree */
.work { display: flex; flex: 1; min-height: 0; }
.panel { display: flex; flex-direction: column; width: 91px; background: #f7f7f7; border-right: 1px solid #bbb; }
.grip { height: 9px; padding: 4px 0 0 44px; }
.grip i { display: block; width: 2px; height: 2px; background: #999; }
.panel-tabs { display: flex; height: 10px; background: #f1f1f1; }
.panel-tabs button { display: grid; place-items: center; width: 13px; background: #c7c7c7; border-right: 1px solid #aaa; }
.panel-tabs .active { background: #f7f7f7; }
.next { width: 3px; height: 3px; margin: 3px 3px 0 auto; border: 1px solid #333; border-width: 1px 1px 0 0; transform: rotate(45deg); }
.filter { display: flex; align-items: center; height: 9px; margin: 0 1px; padding-left: 1px; background: #fff; border: 1px solid #ccc; }
.filter svg { width: 6px; height: 6px; }
.filter input { flex: 1; height: 7px; }
.tree { margin: 0; padding: 1px 0 0; list-style: none; border-bottom: 1px solid #2678a1; }
.tree li { display: flex; align-items: center; height: 8px; padding-left: 9px; white-space: nowrap; }
.tree .root { padding-left: 1px; }
.tree .open { padding-left: 3px; }
.tree .open::before { content: ""; margin-right: 3px; border: 1px solid transparent; border-right: 0; border-left: 2px solid #888; }
.scroll { margin-top: auto; padding: 0 7px 4px; }
.scroll i { display: block; width: 34px; height: 2px; background: #888; }

/* Model view */
.viewport { position: relative; flex: 1; min-width: 0; background: #fff; border-right: 1px solid #bbb; }
.model { width: 100%; height: 100%; }
.triad text { font-size: 4px; }
.view-tools { position: absolute; top: 1px; left: 0; right: 0; display: flex; justify-content: center; gap: 2px; }
.view-tools button { display: flex; align-items: center; gap: 2px; height: 8px; }
.view-tools .drop::after { content: ""; width: 2px; height: 1px; background: #999; }
.view-tools .on { padding: 0 1px; background: #bbb; }
.splitter { position: absolute; left: 0; top: 127px; width: 4px; height: 17px; background: #f7f7f7; border: 1px solid #bbb; border-left: 0; }
.splitter i { display: block; width: 1px; height: 2px; background: #777; }
.task-pane { position: absolute; right: 0; top: 19px; width: 11px; border: 1px solid #aaa; border-right: 0; }
.task-pane button { display: grid; place-items: center; width: 100%; height: 10px; background: #ccc; border-bottom: 1px solid #aaa; }
.task-pane button:first-child { background: #f7f7f7; }

/* Sheet tabs and status */
.sheets { display: flex; height: 8px; flex: none; padding-left: 9px; background: #f8f8f8; border-top: 1px solid #aaa; line-height: 7px; }
.sheets a { padding: 0 4px; background: #cdcdcd; border-right: 1px solid #999; white-space: nowrap; }
.sheets .active { background: #fff; color: #111; font-weight: 700; padding: 0 5px; }
.steps { display: flex; width: 27px; background: #9696b4; }
.steps button { flex: 1; border: 1px solid #77779a; background: #a7a7c2; }
.status { display: grid; grid-template-columns: 1fr 68px 24px 8px 8px; align-items: center; height: 7px; flex: none; background: #e6e6e6; white-space: nowrap; }
.status i { width: 2px; height: 2px; background: #999; }
.status svg { width: 6px; height: 6px; }
```
